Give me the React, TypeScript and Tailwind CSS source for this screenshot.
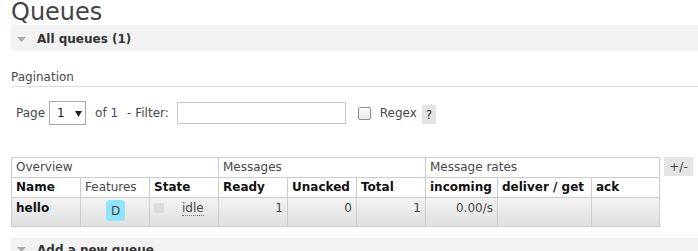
import React from "react";

function Tri() {
  return (
    <svg width="9" height="5" viewBox="0 0 9 5" className="shrink-0">
      <path d="M0 0 H9 L4.5 5 Z" fill="#aaaaaa" />
    </svg>
  );
}

const hdr = "bg-white pl-[4px] leading-[19px] whitespace-nowrap overflow-hidden";
const bold = "font-bold text-[#111]";
const cell = "bg-gradient-to-b from-[#f3f3f3] to-[#dfdfdf] leading-[16px] pt-[2px] whitespace-nowrap overflow-hidden";

export default function App() {
  return (
    <div className="w-full min-h-[251px] bg-white text-[12px] text-[#484848] font-['DejaVu_Sans',Verdana,sans-serif] overflow-hidden">
      <h1 className="pl-[11px] text-[24px] leading-[25px] h-[25px] text-[#444]">Queues</h1>

      <div className="ml-[11px] h-[26px] bg-[#f2f2f2] flex items-start pt-[2px] leading-[24px]">
        <div className="ml-[6px] mr-[11px] mt-[10px] self-start">
          <Tri />
        </div>
        <span className="font-bold text-[#333] whitespace-nowrap">All queues (1)</span>
      </div>

      <div className="ml-[11px] mt-[18px] leading-[16px] pb-[1px] border-b border-[#dddddd]">Pagination</div>

      <div className="mt-[14px] h-[24px] flex items-center pl-[16px] whitespace-nowrap">
        <span>Page</span>
        <div className="ml-[4px] w-[37px] h-[24px] border border-[#a9a9a9] bg-white flex items-center pl-[7px] text-[#222]">
          <span>1</span>
          <svg width="7" height="6" viewBox="0 0 7 6" className="ml-[10px] mt-[1px]">
            <path d="M0 0 H7 L3.5 6 Z" fill="#222" />
          </svg>
        </div>
        <span className="ml-[9px]">of <span className="text-[#4a3a8a]">1</span></span>
        <span className="ml-[9px]">- Filter:</span>
        <div className="ml-[8px] w-[169px] h-[22px] border border-[#c8c8c8] bg-white"></div>
        <div className="ml-[12px] w-[13px] h-[13px] rounded-[2px] border border-[#8f8f8f] bg-gradient-to-b from-[#fdfdfd] to-[#e6e6e6]"></div>
        <span className="ml-[9px]">Regex</span>
        <span className="ml-[5px] w-[14px] h-[19px] mt-[3px] bg-[#e4e4e4] flex items-center justify-center text-[#333]">?</span>
      </div>

      <div className="mt-[32px] flex items-start pl-[11px]">
        <div className="grid grid-cols-[68px_68px_68px_68px_68px_68px_71px_93px_67px] grid-rows-[19px_19px_28px] gap-px bg-[#cccccc] p-px shrink-0">
          <div className={`${hdr} col-span-3`}>Overview</div>
          <div className={`${hdr} col-span-3`}>Messages</div>
          <div className={`${hdr} col-span-3`}>Message rates</div>

          <div className={`${hdr} ${bold}`}>Name</div>
          <div className={hdr}>Features</div>
          <div className={`${hdr} ${bold}`}>State</div>
          <div className={`${hdr} ${bold}`}>Ready</div>
          <div className={`${hdr} ${bold}`}>Unacked</div>
          <div className={`${hdr} ${bold}`}>Total</div>
          <div className={`${hdr} ${bold}`}>incoming</div>
          <div className={`${hdr} ${bold}`}>deliver / get</div>
          <div className={`${hdr} ${bold}`}>ack</div>

          <div className={`${cell} pl-[4px] ${bold}`}>hello</div>
          <div className={`${cell} flex justify-center`}>
            <span className="ml-[1px] w-[19px] h-[21px] rounded-[4px] bg-[#8fe3fb] flex items-center justify-center text-[#444] leading-none">D</span>
          </div>
          <div className={`${cell} flex items-start`}>
            <span className="ml-[4px] mt-[3px] w-[10px] h-[10px] bg-[#dcdcdc] shrink-0"></span>
            <span className="ml-[18px] inline-block h-[16px] border-b border-dotted border-[#777]">idle</span>
          </div>
          <div className={`${cell} text-right pr-[4px]`}>1</div>
          <div className={`${cell} text-right pr-[4px]`}>0</div>
          <div className={`${cell} text-right pr-[4px]`}>1</div>
          <div className={`${cell} text-right pr-[4px]`}>0.00/s</div>
          <div className={cell}></div>
          <div className={cell}></div>
        </div>
        <div className="ml-[4px] w-[29px] h-[19px] bg-[#e4e4e4] flex items-center justify-center text-[#444] leading-none">+/-</div>
      </div>

      <div className="ml-[11px] mt-[11px] h-[26px] bg-[#f2f2f2] flex items-start leading-[24px]">
        <div className="ml-[6px] mr-[11px] mt-[9px] self-start">
          <Tri />
        </div>
        <span className="font-bold text-[#333] whitespace-nowrap">Add a new queue</span>
      </div>
    </div>
  );
}
